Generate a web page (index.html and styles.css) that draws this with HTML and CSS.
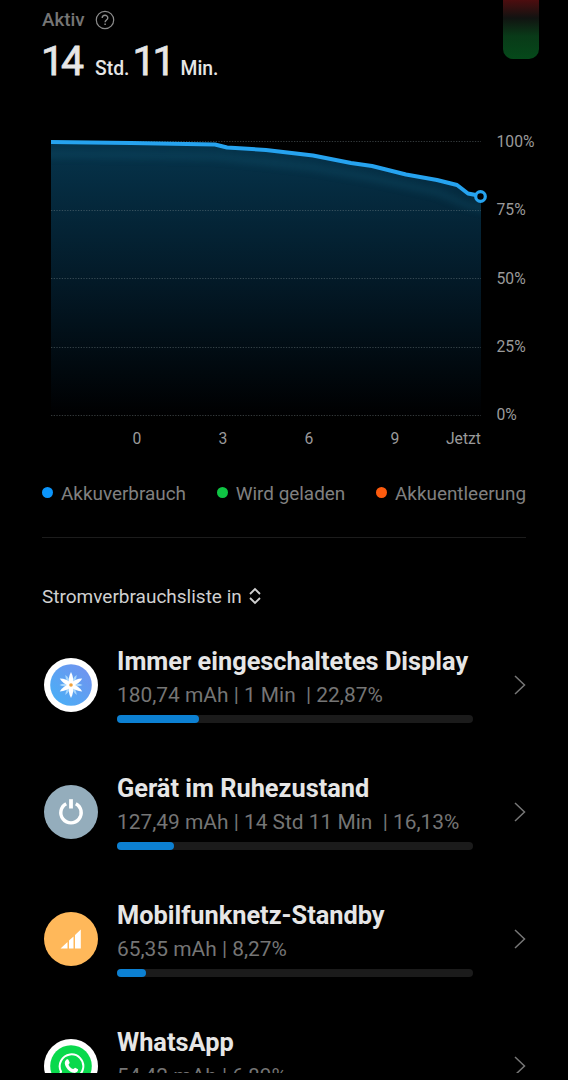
FILE: index.html
```html
<!DOCTYPE html>
<html lang="de">
<head>
  <meta charset="UTF-8">
  <meta name="viewport" content="width=device-width, initial-scale=1">
  <title>Akkuverbrauch</title>
  <link rel="stylesheet" href="styles.css">
</head>
<body>
  <div class="screen">
    <div class="battery"></div>
    <header class="summary">
      <div class="summary-label">
        <span>Aktiv</span>
        <svg width="20" height="20" viewBox="0 0 20 20" fill="none" stroke="#8c8c8c" stroke-width="1.2">
          <circle cx="10" cy="10" r="8.7"/>
          <path d="M7.2 8.1c0-3.7 5.600-3.700 5.600-.2 0 2.100-2.700 2.200-2.700 4.400" stroke-width="1.4"/>
          <path d="M10.1 13.600v1.500" stroke-width="1.5"/>
        </svg>
      </div>
      <div class="time"><b>14</b><span class="hours">Std.</span><b>11</b><span class="minutes">Min.</span></div>
    </header>

    <section class="chart">
      <svg class="plot" width="438" height="285" viewBox="0 0 438 285" fill="none">
        <defs>
          <linearGradient id="fill" x1="0" y1="6" x2="0" y2="279" gradientUnits="userSpaceOnUse">
            <stop offset="0" stop-color="#06344c"/>
            <stop offset="0.5" stop-color="#031a28"/>
            <stop offset="1" stop-color="#000001"/>
          </linearGradient>
          <clipPath id="area"><path d="M0 0H430V279H0Z"/></clipPath>
        </defs>
        <path class="grid-line" d="M0 5.500H430"/>
        <path fill="url(#fill)" d="M0 6L80 7L164 8.500L176 11.500L215 14L262 19.500L300 27L321 30L355 38.500L386 44L406 49L417 57.500L430 60V279H0Z"/>
        <g clip-path="url(#area)">
          <path class="glow" d="M-10 18L80 19L164 20.500L215 26L262 31.500L321 42L386 56L417 69.500L440 74"/>
        </g>
        <path class="grid-line" d="M0 74.500H430M0 142.500H430M0 211.500H430M0 279.500H430"/>
        <path class="level" d="M0 6L80 7L164 8.500L176 11.500L215 14L262 19.500L300 27L321 30L355 38.500L386 44L406 49L417 57.500L430 60"/>
        <circle class="now" cx="429.500" cy="60.500" r="4.800"/>
      </svg>
      <div class="y-axis"><span>100%</span><span>75%</span><span>50%</span><span>25%</span><span>0%</span></div>
      <div class="x-axis"><span>0</span><span>3</span><span>6</span><span>9</span><span>Jetzt</span></div>
    </section>

    <div class="legend">
      <span class="use">Akkuverbrauch</span>
      <span class="charge">Wird geladen</span>
      <span class="drain">Akkuentleerung</span>
    </div>

    <div class="sort">
      <span>Stromverbrauchsliste in</span>
      <svg width="12" height="18" viewBox="0 0 12 18" fill="none" stroke="#d0d0d0" stroke-width="1.8"><path d="M1 7L6 2L11 7M1 11L6 16L11 11"/></svg>
    </div>

    <ul class="apps">
      <li>
        <svg class="icon" viewBox="0 0 54 54">
          <defs>
            <linearGradient id="sky" x1="0" y1="1" x2="1" y2="0">
              <stop offset="0" stop-color="#46b2f7"/>
              <stop offset="1" stop-color="#7590ee"/>
            </linearGradient>
            <path id="petal" d="M27 27Q24.500 20 27 15.500Q29.500 20 27 27Z"/>
            <path id="long-petal" d="M25.500 27Q23.600 20 27 14Q30.400 20 28.500 27Z"/>
          </defs>
          <circle cx="27" cy="27" r="27" fill="#fff"/>
          <circle cx="27" cy="27" r="20.800" fill="url(#sky)"/>
          <g fill="#a9d8fd">
            <use href="#petal" transform="rotate(30 27 27)"/><use href="#petal" transform="rotate(90 27 27)"/>
            <use href="#petal" transform="rotate(150 27 27)"/><use href="#petal" transform="rotate(210 27 27)"/>
            <use href="#petal" transform="rotate(270 27 27)"/><use href="#petal" transform="rotate(330 27 27)"/>
          </g>
          <g fill="#fff">
            <use href="#long-petal"/><use href="#long-petal" transform="rotate(60 27 27)"/>
            <use href="#long-petal" transform="rotate(120 27 27)"/><use href="#long-petal" transform="rotate(180 27 27)"/>
            <use href="#long-petal" transform="rotate(240 27 27)"/><use href="#long-petal" transform="rotate(300 27 27)"/>
          </g>
          <circle cx="27" cy="27" r="1.800" fill="#f2a33c"/>
        </svg>
        <div class="info">
          <h2>Immer eingeschaltetes Display</h2>
          <p>180,74 mAh | 1 Min&nbsp; | 22,87%</p>
          <div class="bar"><i style="width:23%"></i></div>
        </div>
        <svg class="arrow" viewBox="0 0 12 20"><path d="M1 1L10.500 10L1 19"/></svg>
      </li>
      <li>
        <svg class="icon" viewBox="0 0 54 54" fill="none">
          <circle cx="27" cy="27" r="27" fill="#94adbc"/>
          <path d="M22.200 18.700A10.200 10.200 0 1 0 31.800 18.700" stroke="#fff" stroke-width="3.400"/>
          <path d="M27 14.200V23.500" stroke="#fff" stroke-width="3.800"/>
        </svg>
        <div class="info">
          <h2>Gerät im Ruhezustand</h2>
          <p>127,49 mAh | 14 Std 11 Min&nbsp; | 16,13%</p>
          <div class="bar"><i style="width:16.13%"></i></div>
        </div>
        <svg class="arrow" viewBox="0 0 12 20"><path d="M1 1L10.500 10L1 19"/></svg>
      </li>
      <li>
        <svg class="icon" viewBox="0 0 54 54">
          <circle cx="27" cy="27" r="27" fill="#ffb85a"/>
          <path fill="#fff" d="M16.500 36.500L23.500 30V36.500ZM25 36.500V28.500L29.500 24.500V36.500ZM31 36.500V23L36.800 17.500V36.500Z"/>
        </svg>
        <div class="info">
          <h2>Mobilfunknetz-Standby</h2>
          <p>65,35 mAh | 8,27%</p>
          <div class="bar"><i style="width:8.1%"></i></div>
        </div>
        <svg class="arrow" viewBox="0 0 12 20"><path d="M1 1L10.500 10L1 19"/></svg>
      </li>
      <li>
        <svg class="icon" viewBox="0 0 54 54" fill="none">
          <circle cx="27" cy="27" r="27" fill="#fff"/>
          <circle cx="27" cy="27" r="20.800" fill="#09d94c"/>
          <path d="M15 39L17 32.500A11.800 11.800 0 1 1 21.500 37.300Z" stroke="#fff" stroke-width="2"/>
          <path fill="#fff" d="M22.500 20.500C23.600 19.700 24.500 20.300 25 22L25.700 23.700C25.900 24.400 24.400 25.400 24.600 25.900C25.700 28 27 29.200 29.100 30.100C29.700 30.300 30.600 28.600 31.200 28.800L34 30.200C34.500 33 31.800 34.200 29.800 33.800C25.500 33 21.200 28.500 20.800 24.400C20.700 22.900 21.500 21.300 22.500 20.500Z"/>
        </svg>
        <div class="info">
          <h2>WhatsApp</h2>
          <p>54,42 mAh | 6,89%</p>
          <div class="bar"><i style="width:6.89%"></i></div>
        </div>
        <svg class="arrow" viewBox="0 0 12 20"><path d="M1 1L10.500 10L1 19"/></svg>
      </li>
    </ul>
  </div>
</body>
</html>
```
FILE: styles.css
```css
* { box-sizing: border-box; margin: 0; padding: 0; }
body {
  background: #000;
  color: #e6e6e6;
  font-family: Roboto, sans-serif;
  overflow: hidden;
}
svg { display: block; flex: none; }
.screen {
  position: relative;
  height: 1073px;
  padding: 0 42px;
  overflow: hidden;
}
.battery {
  position: absolute;
  top: 0;
  right: 29px;
  width: 36px;
  height: 59px;
  border-radius: 0 0 10px 10px;
  background: linear-gradient(#4d0d0f 0, #111311 18px, #093a18 36px, #05491a 59px);
}

/* header */
.summary { height: 136px; padding-top: 9px; }
.summary-label {
  display: flex;
  align-items: center;
  gap: 10px;
  height: 21px;
  color: #757575;
  font-size: 18.8px;
  font-weight: 500;
}
.time {
  display: flex;
  align-items: baseline;
  margin: 7px 0 0 -1px;
  font-size: 19.3px;
  font-weight: 500;
  line-height: 48px;
}
.time b {
  font-size: 41px;
  font-weight: 400;
  letter-spacing: -3px;
  -webkit-text-stroke: 0.8px #e6e6e6;
}
.hours { margin: 0 3px 0 14px; }
.minutes { margin-left: 8px; }

/* chart */
.chart {
  display: grid;
  grid-template-columns: 430px 1fr;
  column-gap: 15.5px;
  margin-left: 9px;
  margin-right: -15px;
  color: #9a9a9a;
  font-size: 15.7px;
  line-height: 20px;
}
.grid-line {
  stroke: #7d8b90;
  stroke-opacity: 0.42;
  stroke-dasharray: 1.3 1.4;
}
.glow {
  stroke: #1a7090;
  stroke-opacity: 0.17;
  stroke-width: 8;
  filter: blur(3px);
}
.level { stroke: #26a3ef; stroke-width: 4; stroke-linejoin: round; }
.now { fill: #000; stroke: #26a3ef; stroke-width: 3.2; }
.y-axis {
  display: flex;
  flex-direction: column;
  justify-content: space-between;
  height: 293px;
  margin-top: -4px;
}
.x-axis {
  display: grid;
  grid-template-columns: repeat(4, 86px) 43px;
  margin: 4px 0 0 43px;
  text-align: center;
}
.x-axis span:last-child { justify-self: end; }

/* legend */
.legend {
  display: flex;
  justify-content: space-between;
  height: 89px;
  padding-top: 33px;
  border-bottom: 1px solid #1c1c1c;
  color: #808080;
  font-size: 18.9px;
  line-height: 24px;
}
.legend span { display: flex; gap: 8px; white-space: nowrap; }
.legend span::before {
  content: "";
  width: 11px;
  height: 11px;
  margin-top: 5px;
  border-radius: 50%;
  background: #0b95fb;
}
.legend .charge::before { background: #0fc544; }
.legend .drain::before { background: #fd5b0e; }

.sort {
  display: flex;
  align-items: center;
  gap: 7px;
  height: 83px;
  padding-top: 33px;
  color: #d0d0d0;
  font-size: 19px;
}

/* app list */
.apps { list-style: none; }
.apps li {
  display: flex;
  align-items: center;
  height: 127px;
  padding-left: 2px;
}
.icon { width: 54px; height: 54px; margin-right: 19px; }
.info { width: 356px; margin-bottom: 2px; white-space: nowrap; }
.info h2 { font-size: 25.35px; font-weight: 700; line-height: 34px; }
.info p { color: #757575; font-size: 20.9px; line-height: 35px; }
.bar {
  height: 8px;
  margin-top: 2px;
  border-radius: 4px;
  background: #1b1b1b;
}
.bar i {
  display: block;
  height: 8px;
  border-radius: 4px;
  background: #0c80d2;
}
.arrow {
  width: 12px;
  height: 20px;
  margin-left: 41px;
  fill: none;
  stroke: #777;
  stroke-width: 1.5;
}
```
